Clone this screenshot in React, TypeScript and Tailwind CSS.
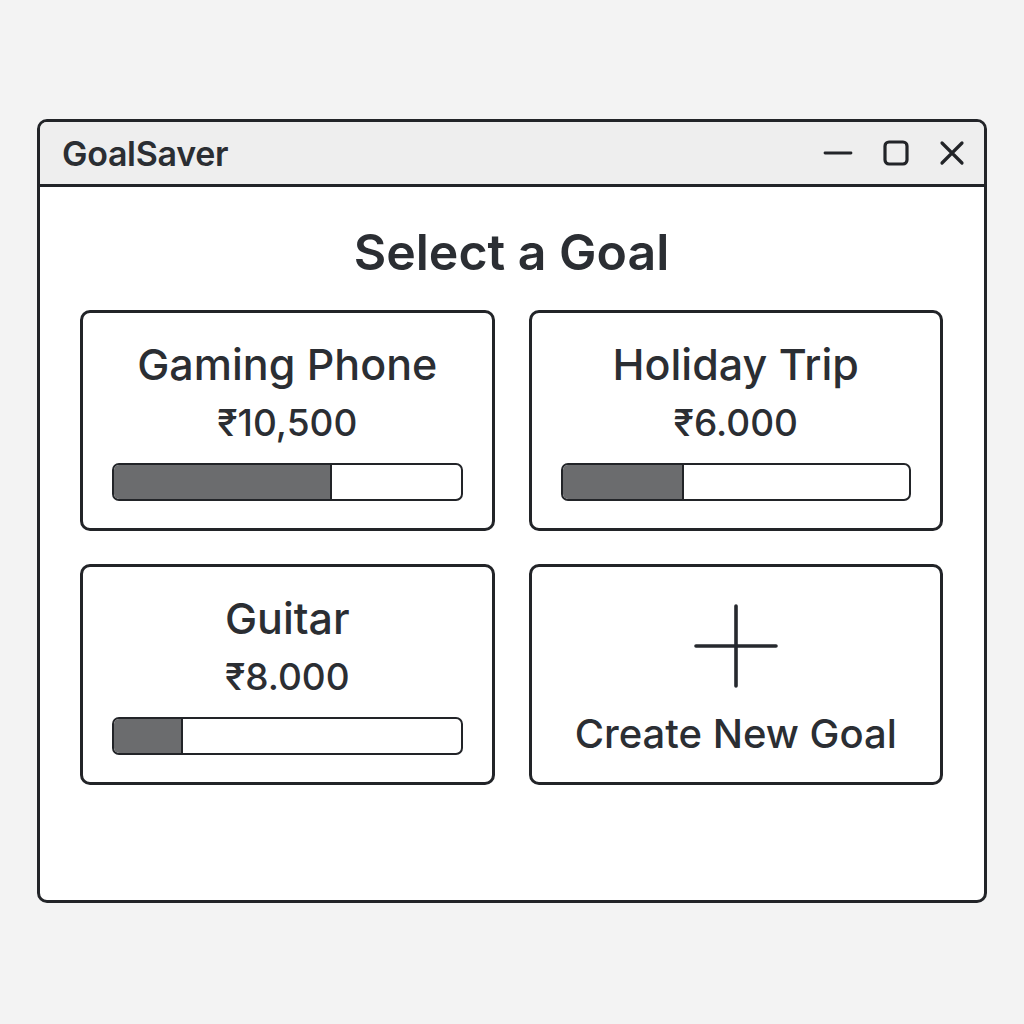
import React from 'react';

type Goal = {
  name: string;
  amount: string;
  progress: number;
};

const goals: Goal[] = [
  { name: 'Gaming Phone', amount: '₹10,500', progress: 63 },
  { name: 'Holiday Trip', amount: '₹6.000', progress: 35 },
  { name: 'Guitar', amount: '₹8.000', progress: 20 },
];

function WindowControls() {
  return (
    <div className="flex items-center gap-[30px] text-[#222428]">
      {/* minimize */}
      <svg width="30" height="26" viewBox="0 0 30 26" fill="none">
        <line x1="2" y1="13" x2="28" y2="13" stroke="currentColor" strokeWidth="2.8" strokeLinecap="round" />
      </svg>
      {/* maximize */}
      <svg width="26" height="26" viewBox="0 0 26 26" fill="none">
        <rect x="2" y="2" width="22" height="22" rx="4" stroke="currentColor" strokeWidth="3.2" />
      </svg>
      {/* close */}
      <svg width="26" height="26" viewBox="0 0 26 26" fill="none">
        <path d="M3 3 L23 23 M23 3 L3 23" stroke="currentColor" strokeWidth="3.2" strokeLinecap="round" />
      </svg>
    </div>
  );
}

function ProgressBar({ value }: { value: number }) {
  return (
    <div className="h-[38px] w-full rounded-[7px] border-[2.5px] border-[#222428] bg-white overflow-hidden flex">
      <div
        className="h-full bg-[#6b6c6e] border-r-[2.5px] border-[#222428]"
        style={{ width: `${value}%` }}
      />
    </div>
  );
}

function GoalCard({ goal }: { goal: Goal }) {
  return (
    <div className="h-[221px] rounded-[10px] border-[3px] border-[#222428] bg-white px-[29px] pt-[30px] flex flex-col items-center">
      <div className="text-[43px] leading-none font-medium text-[#2b2e33]">{goal.name}</div>
      <div className="mt-[18px] text-[37px] leading-none font-medium text-[#2b2e33]">{goal.amount}</div>
      <div className="mt-[22px] w-full">
        <ProgressBar value={goal.progress} />
      </div>
    </div>
  );
}

function NewGoalCard() {
  return (
    <div className="h-[221px] rounded-[10px] border-[3px] border-[#222428] bg-white flex flex-col items-center pt-[37px]">
      <svg width="84" height="84" viewBox="0 0 84 84" fill="none" className="text-[#26292e]">
        <path d="M42 2 L42 82 M2 42 L82 42" stroke="currentColor" strokeWidth="3.6" strokeLinecap="round" />
      </svg>
      <div className="mt-[26px] text-[40px] leading-none font-medium text-[#2b2e33]">Create New Goal</div>
    </div>
  );
}

export default function App() {
  return (
    <div
      className="min-h-screen bg-[#f3f3f3] flex justify-center pt-[119px]"
      style={{ fontFamily: 'Inter, "Noto Sans", "Liberation Sans", sans-serif' }}
    >
      <div className="w-[950px] h-[784px] rounded-[10px] border-[3px] border-[#222428] bg-white overflow-hidden flex flex-col">
        {/* title bar */}
        <div className="h-[65px] shrink-0 bg-[#eeeeee] border-b-[3px] border-[#222428] flex items-center justify-between pl-[22px] pr-[19px]">
          <span className="text-[34px] font-semibold text-[#2b2e33] tracking-[-0.3px]">GoalSaver</span>
          <WindowControls />
        </div>

        {/* content */}
        <div className="flex flex-col items-center pt-[40px] pl-[40px] pr-[41px]">
          <h1 className="text-[50px] leading-none font-semibold text-[#2b2e33]">Select a Goal</h1>
          <div className="mt-[33px] w-full grid grid-cols-2 gap-x-[34px] gap-y-[33px]">
            {goals.map((g) => (
              <GoalCard key={g.name} goal={g} />
            ))}
            <NewGoalCard />
          </div>
        </div>
      </div>
    </div>
  );
}
